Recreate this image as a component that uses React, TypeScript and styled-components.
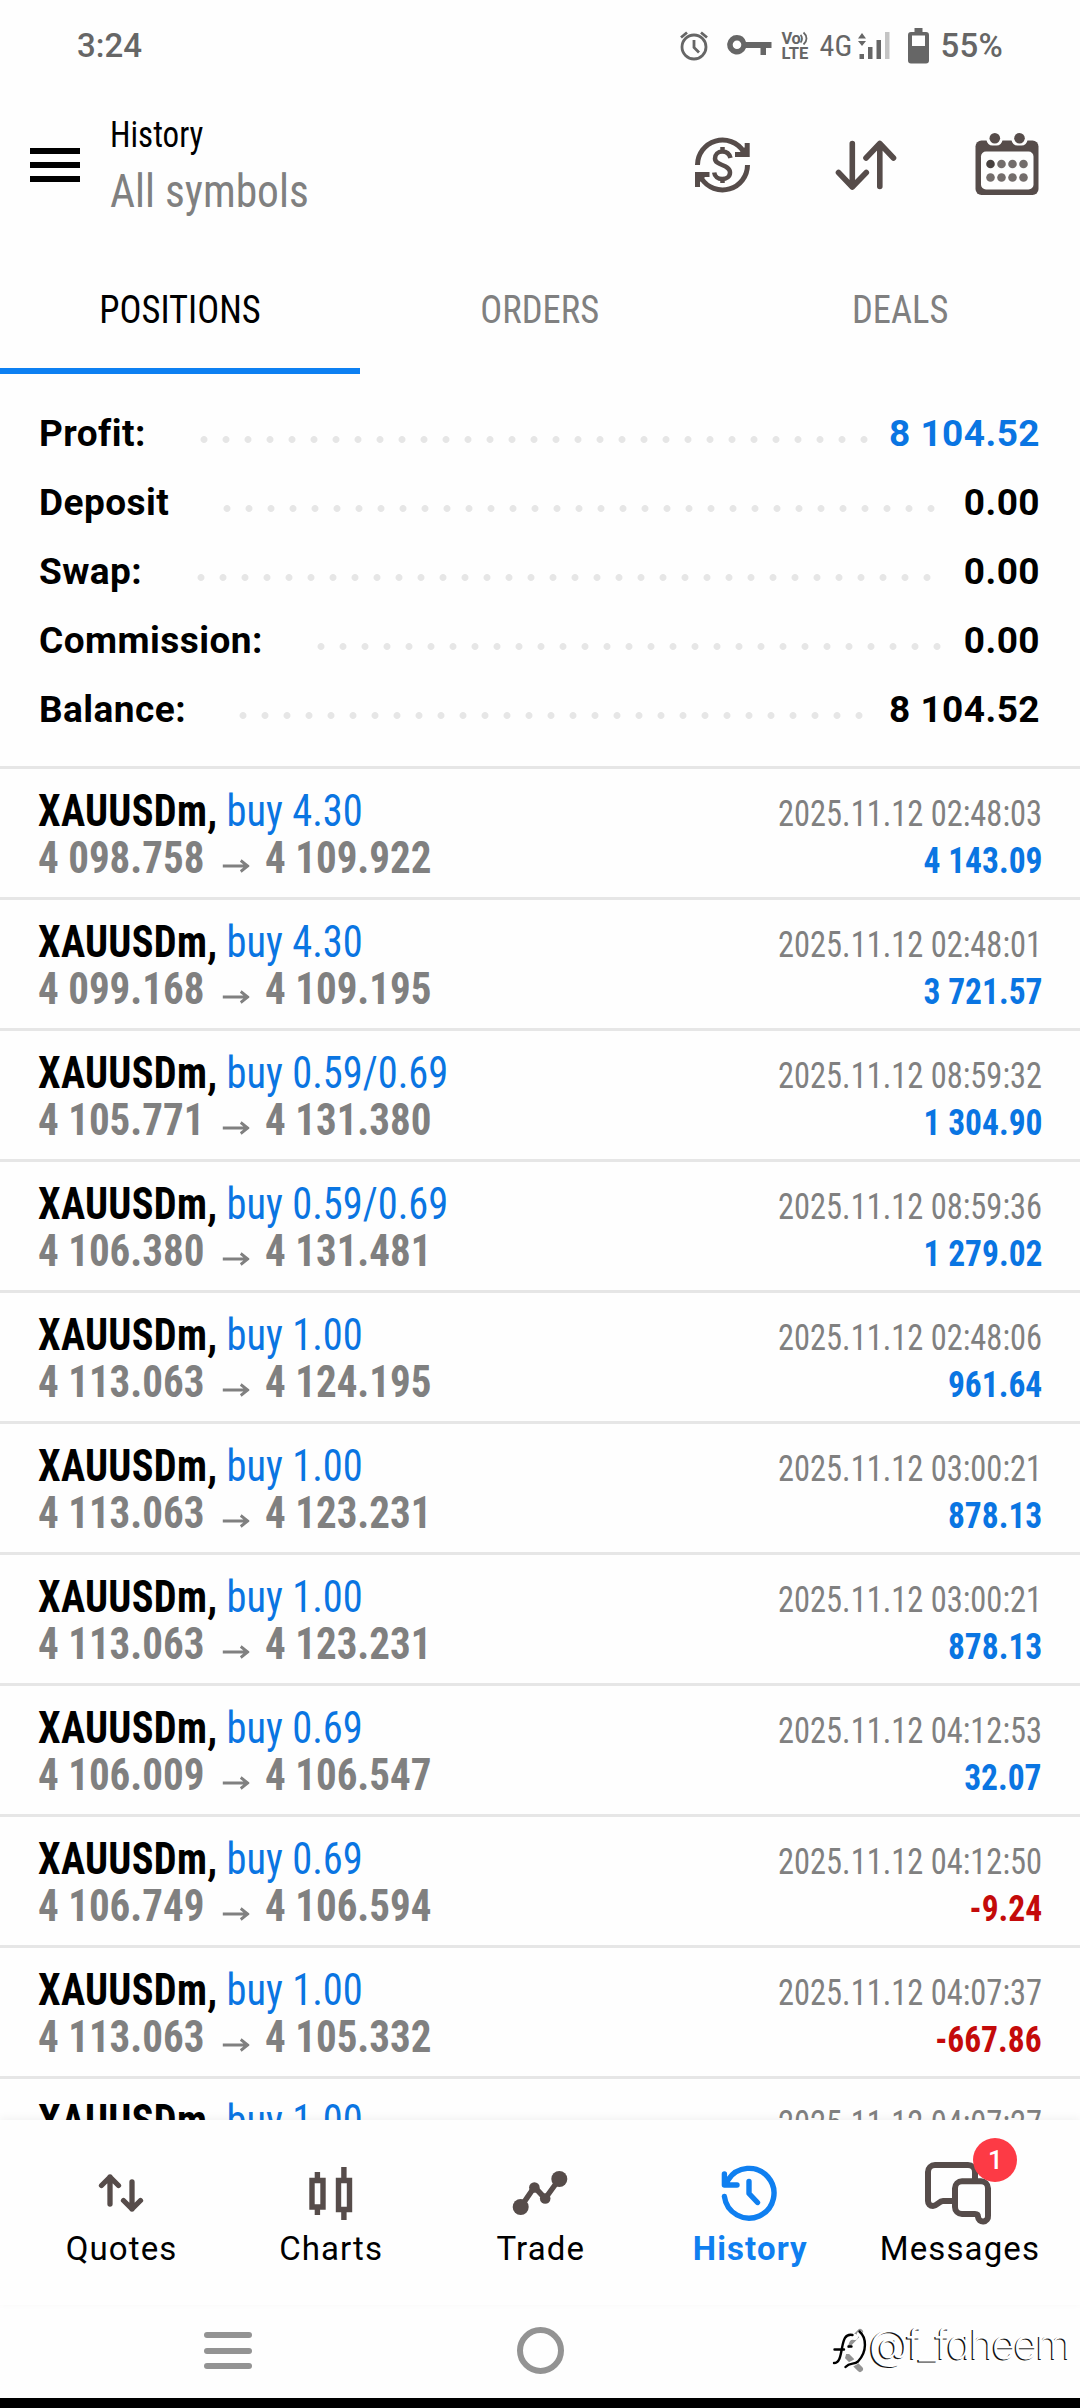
import React from 'react';
import styled, { createGlobalStyle, css } from 'styled-components';

const GlobalStyle = createGlobalStyle`
  * { box-sizing: border-box; }
  body { margin: 0; background: #fefefe; font-family: Roboto, sans-serif; }
`;

const INK = '#564c4a';
const BLUE = '#0a75e2';
const GREY = '#808080';

/* Condensed Roboto, narrowed further by the given factor */
const condensed = css`
  font-family: Roboto, sans-serif;
  font-stretch: 75%;
`;
const squeeze = (factor: number, origin = 'left') => css`
  display: inline-block;
  transform: scaleX(${factor});
  transform-origin: ${origin} center;
`;

const Screen = styled.div`
  position: relative;
  display: flex;
  flex-direction: column;
  width: 1080px;
  height: 2408px;
  overflow: hidden;
  background: #fefefe;
  color: #000;
  white-space: nowrap;
`;

/* Status bar */
const StatusBar = styled.div`
  display: flex;
  align-items: center;
  height: 91px;
  padding: 0 77px 0 77px;
  color: #666;
  font-size: 33px;
  font-weight: 500;
  line-height: 91px;
`;
const Clock = styled.span`
  flex: 1;
`;
const StatusIcon = styled.svg<{ $gap: number }>`
  display: block;
  margin-right: ${(p) => p.$gap}px;
`;
const Volte = styled.div`
  display: flex;
  flex-direction: column;
  width: 28px;
  height: 30px;
  margin-right: 10px;
  font-size: 16.5px;
  font-weight: 700;
  line-height: 15px;
`;
const Voice = styled.span`
  display: flex;
  letter-spacing: -0.6px;
`;
const Network = styled.span`
  ${condensed}
  width: 30px;
  margin-right: 8px;
  font-size: 30px;
  font-weight: 400;
`;
const Battery = styled.span`
  letter-spacing: 0.2px;
`;

/* Header */
const Header = styled.header`
  display: flex;
  align-items: center;
  height: 148px;
  padding: 0 41px 0 30px;
`;
const MenuButton = styled.div<{ $w: number; $gap: number; $bar: number; $color: string; $r: number }>`
  display: flex;
  flex-direction: column;
  gap: ${(p) => p.$gap}px;
  width: ${(p) => p.$w}px;
  &::before, &::after, & > span {
    content: '';
    height: ${(p) => p.$bar}px;
    border-radius: ${(p) => p.$r}px;
    background: ${(p) => p.$color};
  }
`;
const Titles = styled.div`
  ${condensed}
  display: flex;
  flex: 1;
  flex-direction: column;
  align-self: flex-start;
  padding: 16px 0 0 30px;
  line-height: 56px;
`;
const Title = styled.span`
  ${squeeze(0.905)}
  font-size: 36.5px;
`;
const Subtitle = styled.span`
  ${squeeze(0.945)}
  color: ${GREY};
  font-size: 46px;
`;
const Actions = styled.div`
  display: flex;
  gap: 78.5px;
`;

/* Tabs */
const Tabs = styled.div`
  display: flex;
  height: 135px;
`;
const Tab = styled.div<{ $on?: boolean }>`
  ${condensed}
  flex: 1;
  padding-top: 13.5px;
  border-bottom: 6px solid ${(p) => (p.$on ? '#0d80f2' : 'transparent')};
  color: ${(p) => (p.$on ? '#000' : GREY)};
  font-size: 38px;
  line-height: 115.5px;
  text-align: center;
`;
const TabLabel = styled.span`
  ${squeeze(0.962, 'center')}
`;

/* Summary */
const Summary = styled.section`
  padding: 25px 40px 22px 39px;
`;
const SummaryRow = styled.div`
  display: flex;
  height: 69px;
  font-size: 37px;
  font-weight: 700;
  letter-spacing: 0.45px;
  line-height: 69px;
`;
const SummaryLabel = styled.span<{ $w: number }>`
  width: ${(p) => p.$w}px;
`;
const Dots = styled.span<{ $n: number }>`
  width: ${(p) => p.$n * 22}px;
  height: 9px;
  margin: 36px auto 0 0;
  background: radial-gradient(circle at 4px 4.5px, #e6e6e6 3px, transparent 3.9px) 0 0 / 22px 9px repeat-x;
`;
const SummaryValue = styled.span<{ $blue?: boolean }>`
  color: ${(p) => (p.$blue ? BLUE : '#000')};
`;

/* Positions */
const List = styled.section`
  ${condensed}
  flex: 1;
  min-height: 0;
  overflow: hidden;
`;
const Position = styled.div`
  height: 131px;
  padding: 18.5px 38px 0 38px;
  border-top: 3px solid #e6e6e6;
`;
const Line = styled.div`
  display: flex;
  align-items: baseline;
  justify-content: space-between;
  height: 47px;
  line-height: 47px;
`;
const Order = styled.span`
  ${squeeze(0.919)}
  color: ${BLUE};
  font-size: 44px;
`;
const Symbol = styled.span`
  margin-right: 10px;
  color: #000;
  font-weight: 700;
  letter-spacing: 0.3px;
`;
const When = styled.span`
  ${squeeze(0.877, 'right')}
  color: ${GREY};
  font-size: 37px;
`;
const Prices = styled.span`
  ${squeeze(0.932)}
  color: ${GREY};
  font-size: 44px;
  font-weight: 700;
`;
const Arrow = styled.svg`
  margin: 0 17px 0 19px;
`;
const Amount = styled.span<{ $loss?: boolean }>`
  ${squeeze(0.905, 'right')}
  color: ${(p) => (p.$loss ? '#c40a0a' : BLUE)};
  font-size: 37px;
  font-weight: 700;
`;

/* Bottom navigation */
const BottomNav = styled.nav`
  display: flex;
  z-index: 1;
  height: 185px;
  padding: 0 16px;
  background: #fefefe;
  box-shadow: 0 -2px 8px rgba(0, 0, 0, 0.05);
`;
const NavItem = styled.div<{ $on?: boolean }>`
  position: relative;
  display: flex;
  flex: 1;
  flex-direction: column;
  align-items: center;
  padding-top: 33px;
  color: ${(p) => (p.$on ? '#0f7ff0' : '#000')};
  font-size: 33px;
  font-weight: ${(p) => (p.$on ? 700 : 400)};
  letter-spacing: 1.1px;
  line-height: 32px;
`;
const NavLabel = styled.span`
  padding-left: 1.5px;
`;
const Badge = styled.span`
  position: absolute;
  top: 18px;
  left: 119px;
  width: 44px;
  height: 44px;
  border-radius: 50%;
  background: #fd3a45;
  color: #fff;
  font-size: 26px;
  font-weight: 500;
  letter-spacing: 0;
  line-height: 45px;
  text-align: center;
`;

/* System bar */
const SystemBar = styled.div`
  position: relative;
  display: flex;
  align-items: center;
  justify-content: space-between;
  height: 103px;
  padding: 0 204px 2px;
  border-bottom: 10px solid #000;
  background: #fefefe;
`;
const Home = styled.span`
  width: 47px;
  height: 47px;
  border: 6px solid #939393;
  border-radius: 50%;
`;
const Watermark = styled.div`
  position: absolute;
  top: 13px;
  left: 832px;
  display: flex;
  align-items: center;
  gap: 1px;
  height: 52px;
  color: #fff;
  font-family: Inter, sans-serif;
  font-feature-settings: 'cv11';
  font-size: 41px;
  font-weight: 300;
  letter-spacing: -1.8px;
  text-shadow: -1.4px 1px 0 #111;
`;
const WatermarkLogo = styled.svg`
  flex: none;
  margin-top: 12px;
`;

const CurrencyIcon = () => (
  <svg width="64" height="64" viewBox="0 0 64 64" fill="none" stroke={INK} strokeWidth="5">
    <path d="M7.500 32a25 25 0 0 1 46-13.500" />
    <path d="M57.500 32a25 25 0 0 1-46 13.500" />
    <path d="M45 21.500h14.500M57.200 10v14M5 41.500h14.500M7.500 39v15" />
    <path d="M47 22l11-11v11zM18 41L7 52V41z" fill={INK} stroke="none" />
    <path d="M40.500 25c-1-4-4-6.500-8.300-6.500S25 21.500 25 25.500c0 7.500 15 5.500 15 14 0 4-3.500 6.500-7.800 6.500s-7.500-2.500-8-6.500M32.500 14v5M32.500 45v5" strokeWidth="4.500" />
  </svg>
);
const SortIcon = () => (
  <svg width="64" height="64" viewBox="0 0 64 64" fill="none" stroke={INK} strokeWidth="5.600" strokeLinecap="round" strokeLinejoin="round">
    <path d="M19.300 10.500V54M5.500 39.500L19.300 54l14-14.500" />
    <path d="M46.800 53.500V10.500M33 25l13.800-14.500L60.500 25" />
  </svg>
);
const CalendarIcon = () => (
  <svg width="64" height="64" viewBox="0 0 64 64">
    <rect x="0.500" y="7.500" width="63" height="54.500" rx="6" fill={INK} />
    <rect x="6" y="18.500" width="52.500" height="38" rx="5" fill="#fefefe" />
    <path d="M11.500 6v1a6 6 0 0 0 6 5.500h4a6 6 0 0 0 6-5.500V6zM36.500 6v1a6 6 0 0 0 6 5.500h4a6 6 0 0 0 6-5.500V6z" fill="#fefefe" />
    <circle cx="19.800" cy="5.300" r="5.300" fill={INK} />
    <circle cx="44.500" cy="5.300" r="5.300" fill={INK} />
    {[0, 1, 2, 3].map((i) => (
      <g key={i} fill="#736d6b">
        <circle cx={15.500 + i * 11} cy="31" r="4.300" fill={i === 0 ? '#47413f' : undefined} />
        <circle cx={15.500 + i * 11} cy="44.500" r="4.300" />
      </g>
    ))}
  </svg>
);

const QuotesIcon = () => (
  <svg width="80" height="80" fill="none" stroke={INK} strokeWidth="5.300" strokeLinecap="round" strokeLinejoin="round">
    <path d="M29 51V24M20.500 32.500L29 24l8.500 8.500M51 29v27M42.500 47.500L51 56l8.500-8.500" />
  </svg>
);
const ChartsIcon = () => (
  <svg width="80" height="80" fill="none" stroke={INK} strokeWidth="5.400">
    <path d="M22 27.500h11v26.500H22zM27.400 19v7M27.400 56v6M48.500 27.500h11v29h-11zM53.900 14v12M53.900 58v9" />
  </svg>
);
const TradeIcon = () => (
  <svg width="80" height="80" fill={INK}>
    <path d="M20.700 54L34.400 34l10.800 11.500L59.300 26" fill="none" stroke={INK} strokeWidth="5.500" strokeLinejoin="round" />
    <circle cx="20.700" cy="54" r="8" />
    <circle cx="34.400" cy="34.500" r="5.300" />
    <circle cx="45.200" cy="45.500" r="5.300" />
    <circle cx="59.300" cy="26" r="8" />
  </svg>
);
const HistoryIcon = () => (
  <svg width="80" height="80" fill="none" stroke="#0f7ff0" strokeWidth="5.400" strokeLinecap="round" strokeLinejoin="round">
    <path d="M14.400 43.500a24.900 24.900 0 1 0 3.600-16.500L15 31.700M14.400 21v11H27M39 28.500V40.500l8.500 9" />
  </svg>
);
const MessagesIcon = () => (
  <svg width="80" height="80" fill="none" stroke={INK} strokeWidth="6" strokeLinejoin="round">
    <path d="M33 48h-9c-4 0-6 5-10 5-3 0-5-2-5-5V19a7 7 0 0 1 7-7h33a7 7 0 0 1 7 7v9" />
    <path d="M43 28.300h19a7 7 0 0 1 7 7V63a5 5 0 0 1-10 1c0-2-1-3-3-3H43a7 7 0 0 1-7-7V35.300a7 7 0 0 1 7-7z" />
  </svg>
);

const summary = [
  { label: 'Profit:', value: '8 104.52', start: 160.5, n: 31, blue: true },
  { label: 'Deposit', value: '0.00', start: 183.5, n: 33 },
  { label: 'Swap:', value: '0.00', start: 157.5, n: 34 },
  { label: 'Commission:', value: '0.00', start: 277.5, n: 29 },
  { label: 'Balance:', value: '8 104.52', start: 199.5, n: 29 },
];

const positions = [
  ['4.30', '02:48:03', '4 098.758', '4 109.922', '4 143.09'],
  ['4.30', '02:48:01', '4 099.168', '4 109.195', '3 721.57'],
  ['0.59/0.69', '08:59:32', '4 105.771', '4 131.380', '1 304.90'],
  ['0.59/0.69', '08:59:36', '4 106.380', '4 131.481', '1 279.02'],
  ['1.00', '02:48:06', '4 113.063', '4 124.195', '961.64'],
  ['1.00', '03:00:21', '4 113.063', '4 123.231', '878.13'],
  ['1.00', '03:00:21', '4 113.063', '4 123.231', '878.13'],
  ['0.69', '04:12:53', '4 106.009', '4 106.547', '32.07'],
  ['0.69', '04:12:50', '4 106.749', '4 106.594', '-9.24'],
  ['1.00', '04:07:37', '4 113.063', '4 105.332', '-667.86'],
  ['1.00', '04:07:27', '', '', ''],
];

export default function App() {
  return (
    <Screen>
      <GlobalStyle />
      <StatusBar>
        <Clock>3:24</Clock>
        <StatusIcon $gap={18} width="30" height="32" viewBox="0 0 30 32" fill="none" stroke="#666" strokeWidth="2.800">
          <circle cx="15" cy="17" r="12" />
          <path d="M15 10v7.500l5 5M2 7.500l6-5M28 7.500l-6-5" />
        </StatusIcon>
        <StatusIcon $gap={10} width="45" height="22" viewBox="0 0 45 22" fill="#666">
          <path fillRule="evenodd" d="M10 0a9.700 9.700 0 1 0 9 13h14.500v7H39v-7h5.500V7H19a9.700 9.700 0 0 0-9-7zm0 5.500a4.300 4.300 0 1 1 0 8.600 4.300 4.300 0 0 1 0-8.600z" />
        </StatusIcon>
        <Volte>
          <Voice>
            Vo
            <svg width="8" height="14" viewBox="0 0 8 14" fill="none" stroke="#666" strokeWidth="1.800">
              <path d="M0.500 4c2 2 2 5.500 0 7.500M3.500 1.500c4 3.500 4 8.500 0 12" />
            </svg>
          </Voice>
          <span>LTE</span>
        </Volte>
        <Network>4G</Network>
        <StatusIcon $gap={18} width="32" height="30" viewBox="0 0 32 30" fill="#666">
          <path d="M0 7.500L4 2l4 5.500zM0 10l4 5 4-5zM1.500 23h4.500v5H1.500zM10 16h4.500v12H10zM18.500 9H23v19h-4.500z" />
          <path d="M27 1h4.500v27H27z" fill="#c4c4c4" />
        </StatusIcon>
        <StatusIcon $gap={12} width="21" height="36" viewBox="0 0 21 36" fill="#666">
          <path fillRule="evenodd" d="M6.500 0h8v4H18a3 3 0 0 1 3 3v25.500a3 3 0 0 1-3 3H3a3 3 0 0 1-3-3V7a3 3 0 0 1 3-3h3.500zM4 7.500V18h13V7.500z" />
        </StatusIcon>
        <Battery>55%</Battery>
      </StatusBar>

      <Header>
        <MenuButton $w={50} $gap={8} $bar={6} $color="#000" $r={0}><span /></MenuButton>
        <Titles>
          <Title>History</Title>
          <Subtitle>All symbols</Subtitle>
        </Titles>
        <Actions>
          <CurrencyIcon />
          <SortIcon />
          <CalendarIcon />
        </Actions>
      </Header>

      <Tabs>
        <Tab $on><TabLabel>POSITIONS</TabLabel></Tab>
        <Tab><TabLabel>ORDERS</TabLabel></Tab>
        <Tab><TabLabel>DEALS</TabLabel></Tab>
      </Tabs>

      <Summary>
        {summary.map((r) => (
          <SummaryRow key={r.label}>
            <SummaryLabel $w={r.start}>{r.label}</SummaryLabel>
            <Dots $n={r.n} />
            <SummaryValue $blue={r.blue}>{r.value}</SummaryValue>
          </SummaryRow>
        ))}
      </Summary>

      <List>
        {positions.map(([volume, time, open, close, amount], i) => (
          <Position key={i}>
            <Line>
              <Order>
                <Symbol>XAUUSDm,</Symbol>
                buy {volume}
              </Order>
              <When>2025.11.12 {time}</When>
            </Line>
            {open && (
              <Line>
                <Prices>
                  {open}
                  <Arrow width="29" height="14" viewBox="0 0 29 14" fill="none" stroke={GREY} strokeWidth="3">
                    <path d="M0 7h27M19.500 1.500L27 7l-7.500 5.500" />
                  </Arrow>
                  {close}
                </Prices>
                <Amount $loss={amount.startsWith('-')}>{amount}</Amount>
              </Line>
            )}
          </Position>
        ))}
      </List>

      <BottomNav>
        <NavItem><QuotesIcon /><NavLabel>Quotes</NavLabel></NavItem>
        <NavItem><ChartsIcon /><NavLabel>Charts</NavLabel></NavItem>
        <NavItem><TradeIcon /><NavLabel>Trade</NavLabel></NavItem>
        <NavItem $on><HistoryIcon /><NavLabel>History</NavLabel></NavItem>
        <NavItem><MessagesIcon /><NavLabel>Messages</NavLabel><Badge>1</Badge></NavItem>
      </BottomNav>

      <SystemBar>
        <MenuButton $w={48} $gap={9.5} $bar={6} $color="#939393" $r={3}><span /></MenuButton>
        <Home />
        <svg width="48" height="48" fill="none" stroke="#939393" strokeWidth="6" strokeLinecap="round" strokeLinejoin="round">
          <path d="M32 5L14 24l18 18" />
        </svg>
        <Watermark>
          <WatermarkLogo width="36" height="48" viewBox="0 0 36 48" fill="none" strokeLinecap="round">
            <g stroke="#fefefe" strokeWidth="6">
              <path d="M23 11C15 9 14 16 12 24S9 38 4 38M5 25h13M28 8C36 16 34 32 18 39" />
            </g>
            <g stroke="#000" strokeWidth="2.400">
              <path d="M20.500 9C13 7.500 11.500 14 10 22S7.500 37 2 37M2.500 23.500H12M16.500 20.500h3M27.500 5.500c7 6 8 20-1.500 30C22 39 18 36 13.500 41" />
            </g>
          </WatermarkLogo>
          @f_faheem
        </Watermark>
      </SystemBar>
    </Screen>
  );
}
